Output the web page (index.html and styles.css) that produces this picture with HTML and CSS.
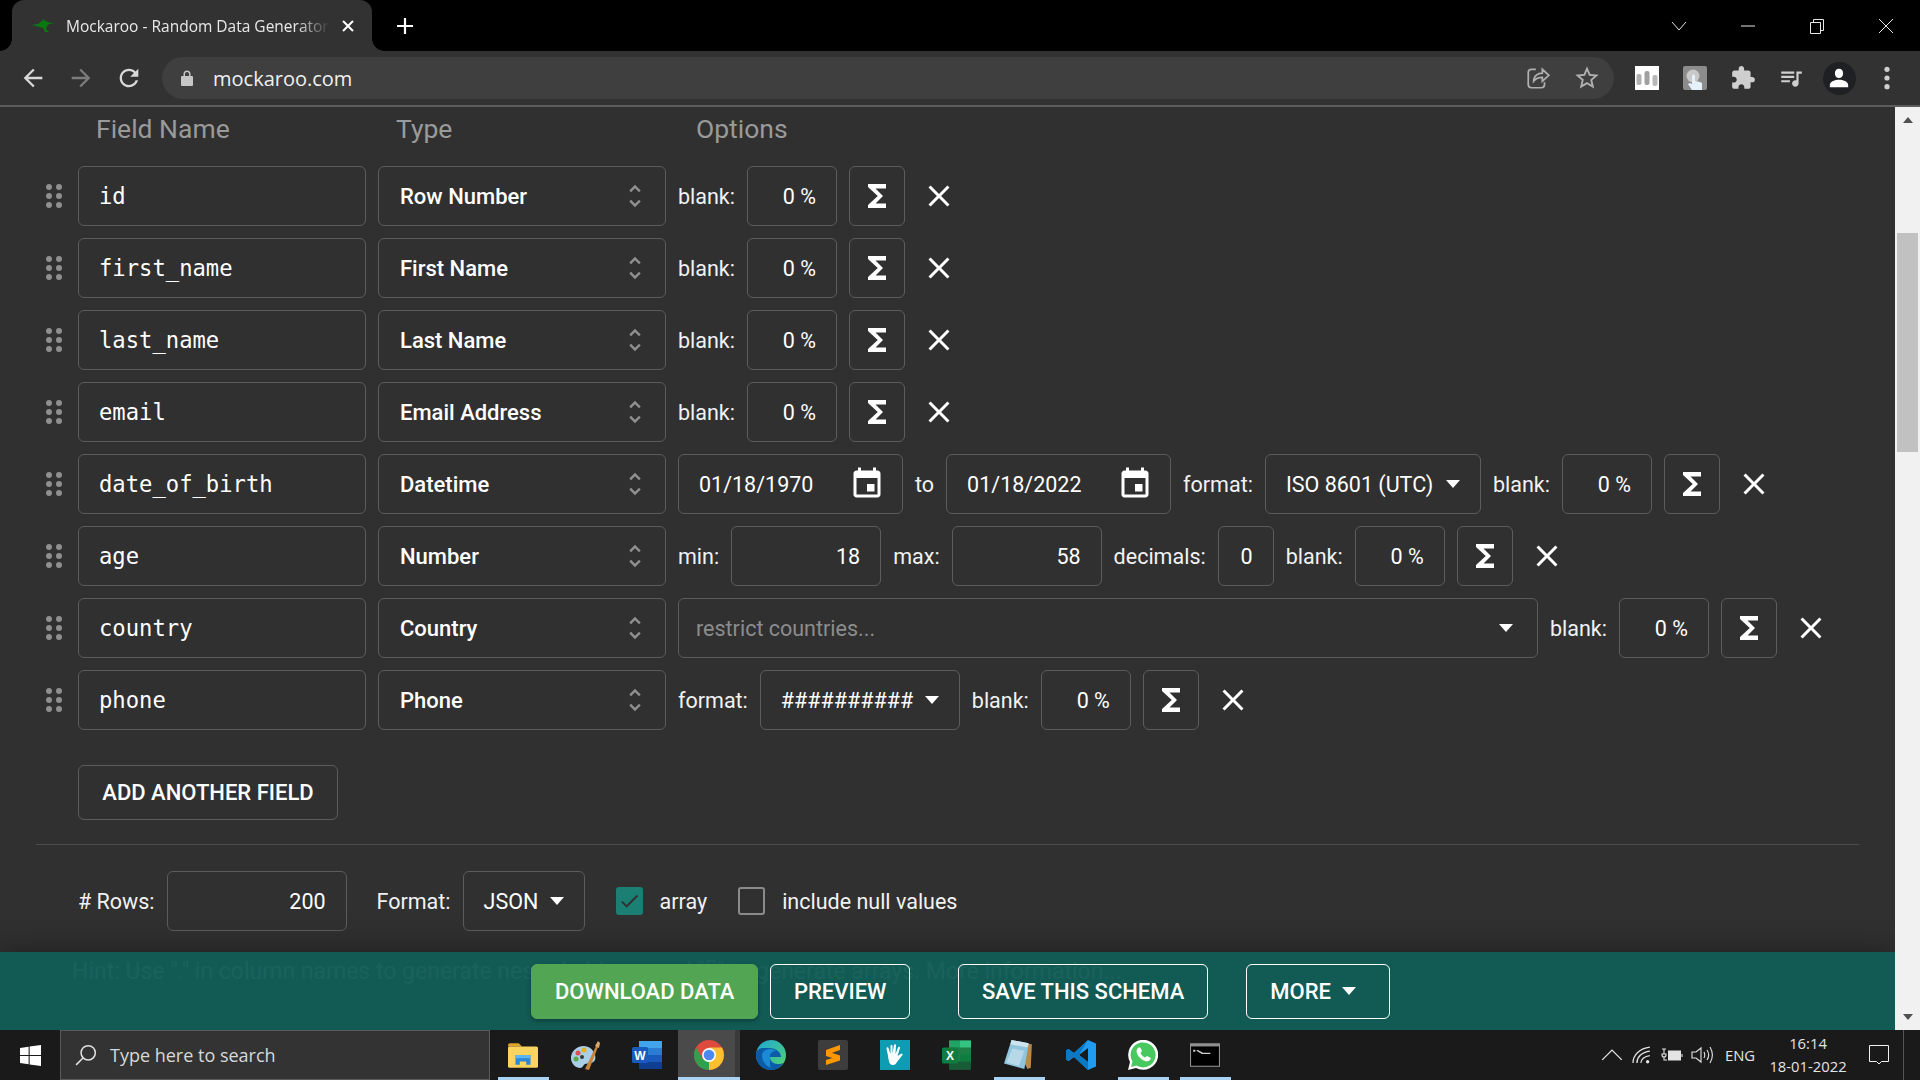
FILE: index.html
```html
<!DOCTYPE html>
<html>
<head>
	<meta charset="utf-8">
	<title>Mockaroo - Random Data Generator</title>
	<link rel="stylesheet" href="styles.css">
</head>
<body>
	<svg class="defs" xmlns="http://www.w3.org/2000/svg">
		<symbol id="i-sigma" viewBox="0 0 24 24"><path d="M18 4H6v2l6.5 6L6 18v2h12v-3h-7l5-5-5-5h7z"/></symbol>
		<symbol id="i-close" viewBox="0 0 24 24"><path d="M19 6.41L17.59 5 12 10.59 6.41 5 5 6.41 10.59 12 5 17.59 6.41 19 12 13.41 17.59 19 19 17.59 13.41 12z"/></symbol>
		<symbol id="i-event" viewBox="0 0 24 24"><path d="M17 12h-5v5h5v-5zM16 1v2H8V1H6v2H5c-1.11 0-1.99.9-1.99 2L3 19c0 1.1.89 2 2 2h14c1.1 0 2-.9 2-2V5c0-1.1-.9-2-2-2h-1V1h-2zm3 18H5V8h14v11z"/></symbol>
		<symbol id="i-unfold" viewBox="0 0 24 24"><path d="M12 5.83L15.17 9l1.41-1.41L12 3 7.41 7.59 8.83 9 12 5.83zm0 12.34L8.83 15l-1.42 1.41L12 21l4.59-4.59L15.17 15 12 18.17z"/></symbol>
		<symbol id="i-drag" viewBox="0 0 16 24"><circle cx="3" cy="3" r="3"/><circle cx="13" cy="3" r="3"/><circle cx="3" cy="12" r="3"/><circle cx="13" cy="12" r="3"/><circle cx="3" cy="21" r="3"/><circle cx="13" cy="21" r="3"/></symbol>
	</svg>

	<div class="tabstrip">
		<div class="tab">
			<svg class="favicon" viewBox="0 0 22 14"><path d="M0 6l6-1 4-3 2-2 1 2 3 1 6 2-5 0-2 2-1 3 3 3-4 0-2-4-3-1-4-1z" fill="#0a7a10"/></svg>
			<span class="tab-title">Mockaroo - Random Data Generator</span>
			<svg class="tab-close" viewBox="0 0 12 12"><path d="M1 1l10 10M11 1L1 11"/></svg>
		</div>
		<svg class="new-tab" viewBox="0 0 18 18"><path d="M9 1v16M1 9h16"/></svg>
		<div class="window-controls">
			<div class="win-btn"><svg viewBox="0 0 16 10"><path d="M1 1l7 8 7-8"/></svg></div>
			<div class="win-btn"><svg viewBox="0 0 16 16"><path d="M1 8h14"/></svg></div>
			<div class="win-btn"><svg viewBox="0 0 16 16"><path d="M1.5 4.5h10v11h-10zM4.5 4.5v-3h10v11h-3"/></svg></div>
			<div class="win-btn"><svg viewBox="0 0 16 16"><path d="M1 1l14 14M15 1L1 15"/></svg></div>
		</div>
	</div>

	<div class="toolbar">
		<div class="nav-btn"><svg viewBox="0 0 24 24"><path d="M20 11H7.83l5.59-5.59L12 4l-8 8 8 8 1.41-1.41L7.83 13H20v-2z"/></svg></div>
		<div class="nav-btn dim"><svg viewBox="0 0 24 24"><path d="M12 4l-1.41 1.41L16.17 11H4v2h12.17l-5.58 5.59L12 20l8-8z"/></svg></div>
		<div class="nav-btn"><svg viewBox="0 0 24 24"><path d="M17.65 6.35C16.2 4.9 14.21 4 12 4c-4.42 0-7.99 3.58-7.99 8s3.57 8 7.99 8c3.73 0 6.84-2.55 7.73-6h-2.08c-.82 2.33-3.04 4-5.65 4-3.31 0-6-2.69-6-6s2.69-6 6-6c1.66 0 3.14.69 4.22 1.78L13 11h7V4l-2.35 2.35z"/></svg></div>
		<div class="omnibox">
			<svg class="lock" viewBox="0 0 14 18"><path d="M3.5 7V5a3.5 3.5 0 0 1 7 0v2h1.5a1 1 0 0 1 1 1v8a1 1 0 0 1-1 1H2a1 1 0 0 1-1-1V8a1 1 0 0 1 1-1zM5 7h4V5a2 2 0 0 0-4 0z"/></svg>
			<span class="url">mockaroo.com</span>
			<div class="omni-icons">
				<svg class="share" viewBox="0 0 24 24"><path d="M10 4H6a3 3 0 0 0-3 3v11a3 3 0 0 0 3 3h9a3 3 0 0 0 3-3v-2M8 15c0-5 4-7.500 8-7.500V4l6 5.500-6 5.500v-3.500c-3.500 0-6 1-8 3.500z"/></svg>
				<svg class="star" viewBox="0 0 24 24"><path d="M22 9.240l-7.190-.62L12 2 9.190 8.630 2 9.240l5.460 4.730L5.820 21 12 17.270 18.180 21l-1.630-7.030L22 9.240zM12 15.400l-3.760 2.270 1-4.280-3.320-2.880 4.380-.38L12 6.100l1.710 4.040 4.380.38-3.320 2.880 1 4.280L12 15.400z"/></svg>
			</div>
		</div>
		<div class="actions">
			<div class="action">
				<svg class="ext" viewBox="0 0 24 24"><rect width="24" height="24" fill="#fff"/><rect x="1.500" y="8" width="5" height="11" rx="2" fill="#b0b0b0"/><rect x="9.500" y="5" width="5" height="14" rx="2" fill="#a0a0a0"/><rect x="17.500" y="9" width="5" height="11" rx="2" fill="#b8b8b8"/></svg>
			</div>
			<div class="action">
				<svg class="ext" viewBox="0 0 24 24"><rect width="24" height="24" rx="2" fill="#8c8c8c"/><circle cx="10" cy="10" r="6.500" fill="#c9c9c9"/><path d="M9 10a1.500 1.500 0 0 1 3 0v5l5 1 2 1v7H9l-4-6 2-1 2 1z" fill="#e6f0fa"/></svg>
			</div>
			<div class="action">
				<svg class="tool-icon" viewBox="0 0 24 24"><path d="M20.500 11H19V7c0-1.100-.9-2-2-2h-4V3.500C13 2.120 11.880 1 10.500 1S8 2.120 8 3.500V5H4c-1.100 0-1.990.9-1.990 2v3.800H3.500c1.490 0 2.700 1.210 2.700 2.700s-1.210 2.700-2.700 2.700H2V20c0 1.100.9 2 2 2h3.800v-1.500c0-1.490 1.210-2.700 2.700-2.700 1.490 0 2.700 1.210 2.700 2.700V22H17c1.100 0 2-.9 2-2v-4h1.500c1.380 0 2.500-1.120 2.500-2.500S21.880 11 20.500 11z"/></svg>
			</div>
			<div class="action">
				<svg class="tool-icon" viewBox="0 0 24 24"><path d="M15 6H3v2h12V6zm0 4H3v2h12v-2zM3 16h8v-2H3v2zM17 6v8.180c-.31-.11-.65-.18-1-.18-1.660 0-3 1.340-3 3s1.340 3 3 3 3-1.340 3-3V8h3V6h-5z"/></svg>
			</div>
			<div class="action">
				<div class="avatar"><svg viewBox="0 0 24 24"><path d="M12 12c2.760 0 4.500-2.240 4.500-5S14.760 2 12 2 7.500 4.240 7.500 7s1.740 5 4.500 5zm0 2c-4 0-10 2-10 5.500V22h20v-2.500C22 16 16 14 12 14z"/></svg></div>
			</div>
			<div class="action">
				<svg class="tool-icon" viewBox="0 0 24 24"><circle cx="12" cy="4" r="2.400"/><circle cx="12" cy="12" r="2.400"/><circle cx="12" cy="20" r="2.400"/></svg>
			</div>
		</div>
	</div>

	<div class="viewport">
		<div class="page">
			<div class="headers">
				<div class="head-name">Field Name</div>
				<div class="head-type">Type</div>
				<div>Options</div>
			</div>

			<div class="row">
				<svg class="drag"><use href="#i-drag"/></svg>
				<div class="box name">id</div>
				<div class="box type">Row Number<svg class="unfold"><use href="#i-unfold"/></svg></div>
				<div class="label">blank:</div>
				<div class="box num w-blank">0 %</div>
				<div class="box sum"><svg class="icon"><use href="#i-sigma"/></svg></div>
				<svg class="icon del"><use href="#i-close"/></svg>
			</div>
			<div class="row">
				<svg class="drag"><use href="#i-drag"/></svg>
				<div class="box name">first_name</div>
				<div class="box type">First Name<svg class="unfold"><use href="#i-unfold"/></svg></div>
				<div class="label">blank:</div>
				<div class="box num w-blank">0 %</div>
				<div class="box sum"><svg class="icon"><use href="#i-sigma"/></svg></div>
				<svg class="icon del"><use href="#i-close"/></svg>
			</div>
			<div class="row">
				<svg class="drag"><use href="#i-drag"/></svg>
				<div class="box name">last_name</div>
				<div class="box type">Last Name<svg class="unfold"><use href="#i-unfold"/></svg></div>
				<div class="label">blank:</div>
				<div class="box num w-blank">0 %</div>
				<div class="box sum"><svg class="icon"><use href="#i-sigma"/></svg></div>
				<svg class="icon del"><use href="#i-close"/></svg>
			</div>
			<div class="row">
				<svg class="drag"><use href="#i-drag"/></svg>
				<div class="box name">email</div>
				<div class="box type">Email Address<svg class="unfold"><use href="#i-unfold"/></svg></div>
				<div class="label">blank:</div>
				<div class="box num w-blank">0 %</div>
				<div class="box sum"><svg class="icon"><use href="#i-sigma"/></svg></div>
				<svg class="icon del"><use href="#i-close"/></svg>
			</div>
			<div class="row">
				<svg class="drag"><use href="#i-drag"/></svg>
				<div class="box name">date_of_birth</div>
				<div class="box type">Datetime<svg class="unfold"><use href="#i-unfold"/></svg></div>
				<div class="box date">01/18/1970<svg class="icon"><use href="#i-event"/></svg></div>
				<div class="label">to</div>
				<div class="box date">01/18/2022<svg class="icon"><use href="#i-event"/></svg></div>
				<div class="label">format:</div>
				<div class="box drop w-iso">ISO 8601 (UTC)<span class="caret"></span></div>
				<div class="label">blank:</div>
				<div class="box num w-blank">0 %</div>
				<div class="box sum"><svg class="icon"><use href="#i-sigma"/></svg></div>
				<svg class="icon del"><use href="#i-close"/></svg>
			</div>
			<div class="row">
				<svg class="drag"><use href="#i-drag"/></svg>
				<div class="box name">age</div>
				<div class="box type">Number<svg class="unfold"><use href="#i-unfold"/></svg></div>
				<div class="label">min:</div>
				<div class="box num w-num">18</div>
				<div class="label">max:</div>
				<div class="box num w-num">58</div>
				<div class="label">decimals:</div>
				<div class="box num w-dec">0</div>
				<div class="label">blank:</div>
				<div class="box num w-blank">0 %</div>
				<div class="box sum"><svg class="icon"><use href="#i-sigma"/></svg></div>
				<svg class="icon del"><use href="#i-close"/></svg>
			</div>
			<div class="row">
				<svg class="drag"><use href="#i-drag"/></svg>
				<div class="box name">country</div>
				<div class="box type">Country<svg class="unfold"><use href="#i-unfold"/></svg></div>
				<div class="box drop w-country"><span class="placeholder">restrict countries...</span><span class="caret"></span></div>
				<div class="label">blank:</div>
				<div class="box num w-blank">0 %</div>
				<div class="box sum"><svg class="icon"><use href="#i-sigma"/></svg></div>
				<svg class="icon del"><use href="#i-close"/></svg>
			</div>
			<div class="row">
				<svg class="drag"><use href="#i-drag"/></svg>
				<div class="box name">phone</div>
				<div class="box type">Phone<svg class="unfold"><use href="#i-unfold"/></svg></div>
				<div class="label">format:</div>
				<div class="box drop w-phone">##########<span class="caret"></span></div>
				<div class="label">blank:</div>
				<div class="box num w-blank">0 %</div>
				<div class="box sum"><svg class="icon"><use href="#i-sigma"/></svg></div>
				<svg class="icon del"><use href="#i-close"/></svg>
			</div>

			<div class="add-btn">ADD ANOTHER FIELD</div>
			<div class="divider"></div>

			<div class="options">
				<div class="label"># Rows:</div>
				<div class="box num w-rows">200</div>
				<div class="label format-label">Format:</div>
				<div class="box drop w-json">JSON<span class="caret"></span></div>
				<div class="check checked"><svg viewBox="0 0 24 24"><path d="M9 16.200L4.800 12l-1.400 1.400L9 19 21 7l-1.400-1.400z"/></svg></div>
				<div class="label check-label">array</div>
				<div class="check"></div>
				<div class="label check-label">include null values</div>
			</div>

			<div class="hint">Hint: Use "." in column names to generate nested objects and "[]" to generate arrays. More information...</div>

			<div class="footer">
				<div class="btn download">DOWNLOAD DATA</div>
				<div class="btn preview">PREVIEW</div>
				<div class="btn save">SAVE THIS SCHEMA</div>
				<div class="btn more">MORE<span class="caret"></span></div>
			</div>
		</div>
		<div class="scrollbar">
			<span class="arrow up"></span>
			<div class="thumb"></div>
			<span class="arrow down"></span>
		</div>
	</div>

	<div class="taskbar">
		<div class="start">
			<svg viewBox="0 0 20 20"><path d="M0 2.800L8.200 1.700V9.500H0zM9.200 1.500L20 0V9.500H9.200zM0 10.500H8.200V18.300L0 17.200zM9.200 10.500H20V20L9.200 18.500z"/></svg>
		</div>
		<div class="search">
			<svg viewBox="0 0 20 20"><circle cx="12" cy="8" r="6.500"/><path d="M7.500 12.500L1 19"/></svg>
			<span>Type here to search</span>
		</div>
		<div class="apps">
			<div class="app open">
				<svg viewBox="0 0 28 24"><path d="M0 3a2 2 0 0 1 2-2h8l3 3H0z" fill="#e0a526"/><rect y="4" width="28" height="20" rx="1.500" fill="#fbd35f"/><path d="M7 12h14v9h-4v-3h-6v3H7z" fill="#2b89d8"/><rect x="7" y="12" width="14" height="3" fill="#5fb6ee"/></svg>
			</div>
			<div class="app">
				<svg viewBox="0 0 30 30"><path d="M14 6C6 6 1 12 1 18s5 10 9 10c3 0 3-3 5-4 3-1 8 0 10-4 2-5-3-14-11-14z" fill="#a9cfe6"/><circle cx="8" cy="13" r="2.500" fill="#d9534f"/><circle cx="14" cy="10" r="2.500" fill="#e6b422"/><circle cx="6" cy="19" r="2.500" fill="#5aa845"/><circle cx="12" cy="17" r="2" fill="#3a3a3a"/><path d="M15 29L26 6l2 1-9 23z" fill="#c9843c"/><path d="M25 6l3-5 2 2-1 5z" fill="#d9a86a"/></svg>
			</div>
			<div class="app">
				<svg viewBox="0 0 30 28"><rect x="7" y="0" width="23" height="28" rx="1.500" fill="#2b7cd3"/><rect x="7" y="0" width="23" height="7" fill="#41a5ee"/><rect x="7" y="14" width="23" height="7" fill="#185abd"/><rect x="7" y="21" width="23" height="7" fill="#103f91"/><rect x="0" y="6" width="16" height="16" rx="1.500" fill="#185abd"/><text x="8" y="18.500" class="app-letter">W</text></svg>
			</div>
			<div class="app open active">
				<svg viewBox="0 0 28 28"><circle cx="14" cy="14" r="14" fill="#dd4b3e"/><path d="M14 14L1.900 21A14 14 0 0 0 14 28z" fill="#2fa04e"/><path d="M14 14v14A14 14 0 0 0 26.100 7H14z" fill="#fbc02d"/><path d="M1.900 7A14 14 0 0 0 1.900 21L8 17.500z" fill="#2fa04e"/><circle cx="14" cy="14" r="6.500" fill="#fff"/><circle cx="14" cy="14" r="5" fill="#4a8af0"/></svg>
			</div>
			<div class="app">
				<svg viewBox="0 0 30 30"><defs><linearGradient id="edge" x1="0" y1="0" x2="1" y2="1"><stop offset="0" stop-color="#1ea5d8"/><stop offset="1" stop-color="#55d66b"/></linearGradient></defs><circle cx="15" cy="15" r="15" fill="url(#edge)"/><path d="M0 15C0 7 7 8 13 8c7 0 12 4 12 9H14c0 4 3 7 8 7 2 0 3 0 5-1-3 5-7 7-12 7C6 30 0 23 0 15z" fill="#0c5ba8"/><path d="M14 16c0-3 3-5 6-5-1-1-3-2-6-2-5 0-8 3-8 7 0 5 4 10 9 12-1-1-1-4-1-12z" fill="#1a8ad4"/></svg>
			</div>
			<div class="app">
				<svg viewBox="0 0 30 30"><rect width="30" height="30" rx="2" fill="#3d3d3d"/><path d="M22 5v5L8 15V10zM8 11l14 4.500v5L8 16zM22 15.500v5L8 25v-5z" fill="#ff9800"/></svg>
			</div>
			<div class="app">
				<svg viewBox="0 0 30 30"><rect width="30" height="30" fill="#0e9cb3"/><path d="M8 16L6.500 8.500a1 1 0 0 1 2-.5L10.500 14 10.500 6a1 1 0 0 1 2 0V13.500L14 5a1 1 0 0 1 2 .5L15.500 14 18 7.500a1 1 0 0 1 2 .5L17.500 16l4-2.500a1 1 0 0 1 1 1.500L17 22c-1 2-2 3-4 3-3 0-4-2-5-9z" fill="#fff"/></svg>
			</div>
			<div class="app">
				<svg viewBox="0 0 30 29"><rect x="7" y="0" width="22" height="29" rx="1.500" fill="#1d7f45"/><rect x="18" y="0" width="11" height="7" fill="#33c481"/><rect x="7" y="0" width="11" height="7" fill="#21a366"/><rect x="18" y="14" width="11" height="7" fill="#107c41"/><rect x="7" y="21" width="22" height="8" fill="#185c37"/><rect x="0" y="7" width="16" height="16" rx="1.500" fill="#107c41"/><text x="8" y="19.500" class="app-letter">X</text></svg>
			</div>
			<div class="app open">
				<svg viewBox="0 0 28 28"><path d="M8 1l18 3-1 22-3 1z" fill="#b8894a"/><path d="M7 0l16 3-4 24-19-5z" fill="#8fc5dd"/><path d="M7 0l16 3-1 4L6 4z" fill="#cfe4ee"/><path d="M8 8l11 2-5 14-12-3z" fill="#b6d8e8"/></svg>
			</div>
			<div class="app">
				<svg viewBox="0 0 30 30"><path d="M22 0L8 13 2.500 9 0 10.500v9L2.500 21 8 17l14 13 8-3.500v-23zM22 8v14l-9-7z" fill="#1f9cf0"/><path d="M22 0L8 13 2.500 9 0 10.500v4.500h13zM0 15v4.500L2.500 21 8 17l14 13V22l-9-7z" fill="#0a78c2"/></svg>
			</div>
			<div class="app open">
				<svg viewBox="0 0 30 30"><path d="M0 30l2-8A15 15 0 1 1 8 28z" fill="#fff"/><path d="M3 27l1.500-5.500A12.500 12.500 0 1 1 8.500 25.500z" fill="#48c95f"/><path d="M10 8c1-1 2-1 2.500 0l1.500 3-1.500 2c1 2 2.500 3.500 4.500 4.500l2-1.500 3 1.500c1 .5 1 1.500 0 2.500-2 2-5 1.500-8-.5s-5-5-5.500-8c0-1.500.5-2.500 1.500-3.500z" fill="#fff"/></svg>
			</div>
			<div class="app open">
				<svg viewBox="0 0 28 22"><rect width="28" height="22" fill="#8f8f8f"/><rect x="1" y="3" width="26" height="18" fill="#000"/><path d="M3 6h2v2H3zM7 6l5 3h7v1h-8L6 7z" fill="#cfcfcf"/></svg>
			</div>
		</div>
		<div class="tray">
			<div class="tray-item"><svg viewBox="0 0 18 10"><path d="M1 9l8-8 8 8"/></svg></div>
			<div class="tray-item"><svg viewBox="0 0 18 16"><path d="M1 15C1 8 7 2 16 1M4.500 15c0-5 4-9.500 11.500-10.500M8 15c0-3 3-6 8-6.500"/><circle cx="14" cy="14" r="1.500" class="tray-fill"/></svg></div>
			<div class="tray-item"><svg viewBox="0 0 22 14"><path d="M1 1h4M3 1v5M1 6h4v1a2 2 0 0 1-4 0zM3 9v3h3"/><rect x="7" y="2.500" width="13" height="10" class="tray-fill"/><path d="M21 6v3"/></svg></div>
			<div class="tray-item"><svg viewBox="0 0 22 18"><path d="M1 6h4l5-4v14l-5-4H1zM13 6c1 2 1 4 0 6M16 4c2 3 2 7 0 10M19 1c3 5 3 11 0 16"/></svg></div>
			<div class="tray-lang">ENG</div>
			<div class="clock"><div>16:14</div><div>18-01-2022</div></div>
			<div class="notify"><svg viewBox="0 0 20 20"><path d="M.5 .5h19v16h-7l-2.500 2.500-2.500-2.500h-7z"/></svg></div>
			<div class="show-desktop"></div>
		</div>
	</div>
</body>
</html>
```

FILE: styles.css
```css
* {
	box-sizing: border-box;
}
html, body {
	margin: 0px;
	height: 100%;
	overflow: hidden;
}
body {
	display: flex;
	flex-direction: column;
	width: 1920px;
	height: 1080px;
	background: #303030;
	font-family: Roboto, sans-serif;
	font-size: 21.5px;
	color: #fff;
}
.defs {
	display: none;
}

/* browser tab strip */
.tabstrip {
	display: flex;
	align-items: center;
	height: 51px;
	flex: none;
	background: #000;
	padding-left: 12px;
}
.tab {
	display: flex;
	align-items: center;
	position: relative;
	width: 360px;
	height: 51px;
	padding-left: 20px;
	background: #323232;
	border-radius: 12px 12px 0px 0px;
}
.tab::before, .tab::after {
	content: "";
	position: absolute;
	bottom: 0px;
	width: 12px;
	height: 12px;
}
.tab::before {
	left: -12px;
	background: radial-gradient(circle at 0 0, transparent 11.5px, #323232 12px);
}
.tab::after {
	right: -12px;
	background: radial-gradient(circle at 100% 0, transparent 11.5px, #323232 12px);
}
.favicon {
	width: 22px;
	height: 14px;
	flex: none;
}
.tab-title {
	width: 264px;
	margin-left: 12px;
	overflow: hidden;
	white-space: nowrap;
	font-family: "Open Sans", sans-serif;
	font-size: 15.5px;
	color: #e8e8e8;
	-webkit-mask-image: linear-gradient(to right, #000 230px, transparent 264px);
	mask-image: linear-gradient(to right, #000 230px, transparent 264px);
}
.tab-close {
	width: 12px;
	height: 12px;
	margin-left: 12px;
	fill: none;
	stroke: #fff;
	stroke-width: 2;
}
.new-tab {
	width: 18px;
	height: 18px;
	margin-left: 24px;
	fill: none;
	stroke: #fff;
	stroke-width: 2.2;
}
.window-controls {
	display: flex;
	margin-left: auto;
}
.win-btn {
	display: flex;
	align-items: center;
	justify-content: center;
	width: 69px;
	height: 44px;
}
.win-btn svg {
	width: 16px;
	height: 16px;
	fill: none;
	stroke: #e6e6e6;
	stroke-width: 1;
}

/* browser toolbar */
.toolbar {
	display: flex;
	align-items: center;
	height: 56px;
	flex: none;
	padding: 0px 9px;
	background: #323232;
	border-bottom: solid 2px #5c5c5c;
}
.nav-btn {
	display: flex;
	align-items: center;
	justify-content: center;
	width: 48px;
}
.nav-btn svg {
	width: 28px;
	height: 28px;
	fill: #d8d8d8;
}
.nav-btn.dim svg {
	fill: #7c7c7c;
}
.omnibox {
	display: flex;
	align-items: center;
	flex: 1;
	height: 42px;
	margin: 0px 9px;
	padding: 0px 13px 0px 18px;
	background: #3f3f3f;
	border-radius: 21px;
}
.lock {
	width: 14px;
	height: 18px;
	fill: #c6c6c6;
}
.url {
	margin-left: 19px;
	font-family: "Open Sans", sans-serif;
	font-size: 20px;
	color: #f0f0f0;
}
.omni-icons {
	display: flex;
	align-items: center;
	gap: 22px;
	margin-left: auto;
}
.share {
	width: 26px;
	height: 26px;
	fill: none;
	stroke: #b0b0b0;
	stroke-width: 1.6;
}
.star {
	width: 28px;
	height: 28px;
	fill: #b0b0b0;
}
.actions {
	display: flex;
}
.action {
	display: flex;
	align-items: center;
	justify-content: center;
	width: 48px;
}
.ext {
	width: 24px;
	height: 24px;
}
.tool-icon {
	width: 26px;
	height: 26px;
	fill: #cfcfcf;
}
.avatar {
	display: flex;
	align-items: center;
	justify-content: center;
	width: 33px;
	height: 33px;
	background: #1f2023;
	border-radius: 50%;
}
.avatar svg {
	width: 22px;
	height: 22px;
	fill: #fff;
}

/* page under the browser chrome */
.viewport {
	display: flex;
	flex: 1;
	min-height: 0px;
}
.page {
	position: relative;
	flex: 1;
	overflow: hidden;
}
.headers {
	display: flex;
	height: 59px;
	padding: 0px 0px 16px 96px;
	align-items: center;
	font-size: 26.5px;
	color: #9a9a9a;
}
.head-name {
	width: 300px;
}
.head-type {
	width: 300px;
}
.row {
	display: flex;
	align-items: center;
	gap: 12px;
	height: 60px;
	margin-bottom: 12px;
	padding-left: 46px;
}
.drag {
	width: 16px;
	height: 24px;
	margin-right: 4px;
	fill: #8f8f8f;
	flex: none;
}
.box {
	display: flex;
	align-items: center;
	flex: none;
	height: 60px;
	padding: 0px 20px;
	border: solid 1px #5c5c5c;
	border-radius: 6px;
	white-space: nowrap;
}
.name {
	width: 288px;
	font-family: "DejaVu Sans Mono", monospace;
	font-size: 22.2px;
}
.type {
	justify-content: space-between;
	width: 288px;
	padding-left: 21px;
	padding-right: 15px;
	font-size: 22px;
	font-weight: 500;
}
.unfold {
	width: 30px;
	height: 30px;
	fill: #8f8f8f;
}
.label {
	flex: none;
	color: #f2f2f2;
	white-space: nowrap;
}
.num {
	justify-content: flex-end;
}
.w-blank {
	width: 90px;
}
.w-num {
	width: 150px;
}
.w-dec {
	width: 56px;
}
.w-rows {
	width: 180px;
}
.date {
	justify-content: space-between;
	width: 225px;
	padding-right: 17px;
}
.drop {
	justify-content: space-between;
}
.w-iso {
	width: 216px;
}
.w-phone {
	width: 200px;
}
.w-country {
	width: 860px;
	padding-left: 17px;
	padding-right: 24px;
}
.w-json {
	width: 122px;
}
.placeholder {
	color: #8c8c8c;
}
.caret {
	width: 0px;
	height: 0px;
	flex: none;
	border-left: solid 7px transparent;
	border-right: solid 7px transparent;
	border-top: solid 8px #fff;
}
.icon {
	width: 36px;
	height: 36px;
	fill: #fff;
	flex: none;
}
.sum {
	justify-content: center;
	width: 56px;
	padding: 0px;
}
.del {
	margin-left: 4px;
}

.add-btn {
	display: flex;
	align-items: center;
	justify-content: center;
	width: 260px;
	height: 55px;
	margin: 35px 0px 0px 78px;
	border: solid 1px #5c5c5c;
	border-radius: 6px;
	font-size: 22px;
	font-weight: 500;
}
.divider {
	height: 1px;
	margin: 24px 36px 0px;
	background: #4c4c4c;
}
.options {
	display: flex;
	align-items: center;
	gap: 12px;
	margin: 26px 0px 0px 78px;
}
.format-label {
	margin-left: 18px;
}
.check {
	width: 27px;
	height: 28px;
	margin-left: 19px;
	border: solid 2px #8a8a8a;
	border-radius: 3px;
	flex: none;
}
.check.checked {
	margin-left: 19px;
	background: #1b8073;
	border-color: #1b8073;
}
.check svg {
	display: block;
	width: 100%;
	height: 100%;
	fill: #303030;
}
.check-label {
	margin-left: 5px;
}
.hint {
	margin: 27px 0px 0px 72px;
	font-size: 23px;
	line-height: 28px;
	white-space: nowrap;
}

/* sticky action bar, covers the hint */
.footer {
	position: absolute;
	left: 0px;
	right: 0px;
	bottom: 0px;
	display: flex;
	align-items: center;
	gap: 12px;
	height: 78px;
	padding: 0px 0px 0px 531px;
	background: rgba(18, 92, 86, 0.97);
	box-shadow: 0px 0px 30px rgba(0, 0, 0, 0.4);
}
.btn {
	display: flex;
	align-items: center;
	gap: 11px;
	height: 55px;
	padding: 0px 23px;
	border: solid 1px #fff;
	border-radius: 6px;
	font-size: 22px;
	font-weight: 500;
}
.btn.download {
	background: #52a653;
	border-color: #52a653;
	box-shadow: 0px 2px 4px rgba(0, 0, 0, 0.3);
}
.btn.preview {
	padding: 0px 22.5px;
}
.btn.save {
	margin-left: 36px;
}
.btn.more {
	margin-left: 26px;
	padding-right: 33px;
}

/* scrollbar */
.scrollbar {
	display: flex;
	flex-direction: column;
	align-items: center;
	width: 25px;
	flex: none;
	background: #f1f1f1;
}
.arrow {
	flex: none;
	width: 0px;
	height: 0px;
	border-left: solid 5.5px transparent;
	border-right: solid 5.5px transparent;
}
.arrow.up {
	margin-top: 10px;
	border-bottom: solid 6px #505050;
}
.arrow.down {
	margin-top: auto;
	margin-bottom: 10px;
	border-top: solid 6px #505050;
}
.thumb {
	width: 21px;
	height: 219px;
	margin-top: 110px;
	background: #c1c1c1;
}

/* windows taskbar */
.taskbar {
	display: flex;
	align-items: stretch;
	height: 50px;
	flex: none;
	background: #1a1a1a;
}
.start {
	display: flex;
	align-items: center;
	justify-content: center;
	width: 60px;
}
.start svg {
	width: 21px;
	height: 21px;
	fill: #fff;
}
.search {
	display: flex;
	align-items: center;
	gap: 13px;
	width: 430px;
	padding-left: 14px;
	background: #333;
	border: solid 1px #5a5a5a;
	font-family: "Open Sans", sans-serif;
	font-size: 18px;
	color: #d8d8d8;
}
.search svg {
	width: 22px;
	height: 22px;
	fill: none;
	stroke: #e0e0e0;
	stroke-width: 1.4;
}
.apps {
	display: flex;
	margin-left: 2px;
}
.app {
	display: flex;
	align-items: center;
	justify-content: center;
	position: relative;
	width: 62px;
}
.app svg {
	width: 30px;
	height: 30px;
}
.app.active {
	background: #4a4a4a;
	box-shadow: inset -5px 0px 0px #3a3a3a;
}
.app.open::after {
	content: "";
	position: absolute;
	left: 6px;
	right: 5px;
	bottom: 0px;
	height: 3px;
	background: #a9d3f5;
}
.app.active::after {
	left: 0px;
	right: 0px;
}
.app-letter {
	font-family: "Liberation Sans", sans-serif;
	font-size: 12px;
	font-weight: bold;
	fill: #fff;
	text-anchor: middle;
}
.tray {
	display: flex;
	align-items: center;
	margin-left: auto;
	color: #e4e4e4;
	font-family: "Open Sans", sans-serif;
	font-size: 14.8px;
}
.tray-item {
	display: flex;
	align-items: center;
	justify-content: center;
	width: 30px;
}
.tray-item svg {
	width: 22px;
	height: 18px;
	fill: none;
	stroke: #e4e4e4;
	stroke-width: 1.1;
}
.tray-item svg .tray-fill {
	fill: #e4e4e4;
	stroke: none;
}
.tray-lang {
	width: 44px;
	padding-left: 8px;
}
.clock {
	width: 94px;
	text-align: center;
	line-height: 23px;
}
.notify {
	display: flex;
	align-items: center;
	justify-content: center;
	width: 48px;
}
.notify svg {
	width: 20px;
	height: 20px;
	fill: none;
	stroke: #f0f0f0;
	stroke-width: 1;
}
.show-desktop {
	width: 17px;
	height: 50px;
	border-left: solid 1px #555;
}
```
